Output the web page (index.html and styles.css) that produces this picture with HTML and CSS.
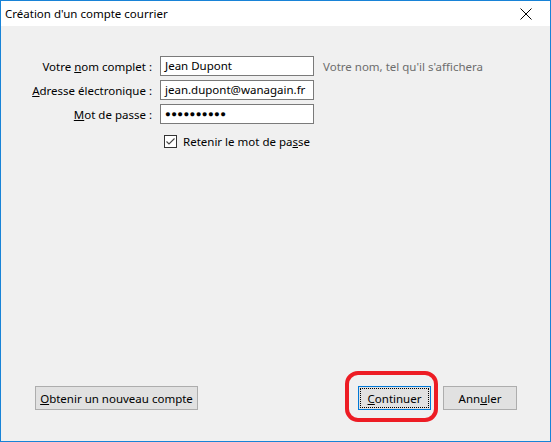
FILE: index.html
```html
<!DOCTYPE html>
<html lang="fr">
<head>
    <meta charset="UTF-8">
    <title>Création d'un compte courrier</title>
    <link rel="stylesheet" href="styles.css">
</head>
<body>
    <div class="window">
        <div class="titlebar">
            <span class="title">Création d'un compte courrier</span>
            <svg class="close" width="12" height="12" viewBox="0 0 12 12">
                <path d="M0.5 0.5 L11.5 11.5 M11.5 0.5 L0.5 11.5" stroke="#000" stroke-width="1" fill="none"/>
            </svg>
        </div>
        <div class="content">
            <div class="form">
                <label class="label">Votre <u>n</u>om complet :</label>
                <div class="field">Jean Dupont</div>
                <span class="hint">Votre nom, tel qu'il s'affichera</span>

                <label class="label"><u>A</u>dresse électronique :</label>
                <div class="field">jean.dupont@wanagain.fr</div>
                <span></span>

                <label class="label"><u>M</u>ot de passe :</label>
                <div class="field dots">●●●●●●●●●●</div>
                <span></span>

                <span></span>
                <div class="remember">
                    <span class="checkbox">
                        <svg width="11" height="11" viewBox="0 0 11 11">
                            <path d="M1.5 5.5 L4 8 L9.5 2.5" stroke="#444" stroke-width="1.1" fill="none"/>
                        </svg>
                    </span>
                    <span>Retenir le mot de pa<u>s</u>se</span>
                </div>
            </div>

            <div class="buttons">
                <button class="btn wide"><u>O</u>btenir un nouveau compte</button>
                <div class="right">
                    <div class="highlight">
                        <button class="btn focused"><u>C</u>ontinuer</button>
                    </div>
                    <button class="btn">Ann<u>u</u>ler</button>
                </div>
            </div>
        </div>
    </div>
</body>
</html>
```

FILE: styles.css
```css
body {
    margin: 0;
    font-family: "Noto Sans", "Open Sans", sans-serif;
    font-size: 11.5px;
    color: #000;
}
.window {
    width: 549px;
    height: 440px;
    border: 1px solid #1883d7;
    background: #f0f0f0;
    display: flex;
    flex-direction: column;
}
.titlebar {
    height: 25px;
    background: #fff;
    display: flex;
    align-items: center;
    justify-content: space-between;
    padding: 0 18px 0 4px;
}
.title {
    font-size: 11.5px;
    color: #000;
}
.content {
    flex: 1;
    display: flex;
    flex-direction: column;
    padding-top: 30px;
}
.form {
    display: grid;
    grid-template-columns: 151px 154px auto;
    column-gap: 8px;
    row-gap: 4px;
    align-items: center;
}
.label {
    text-align: right;
}
.field {
    height: 18px;
    border: 1px solid #7a7a7a;
    background: #fff;
    padding: 0 4px;
    line-height: 18px;
    white-space: nowrap;
    overflow: hidden;
}
.dots {
    font-size: 9.5px;
    letter-spacing: 0.4px;
}
.hint {
    color: #6d6d6d;
    margin-left: 1px;
}
.remember {
    grid-column: 2 / 4;
    display: flex;
    align-items: center;
    gap: 6px;
    margin: 6px 0 0 4px;
}
.checkbox {
    width: 11px;
    height: 11px;
    border: 1px solid #333;
    background: #fff;
    display: flex;
}
.buttons {
    margin-top: auto;
    margin-bottom: 31px;
    display: flex;
    justify-content: space-between;
    padding: 0 33px 0 34px;
}
.right {
    display: flex;
    gap: 12px;
}
.btn {
    height: 24px;
    width: 74px;
    font-family: inherit;
    font-size: 11.5px;
    color: #000;
    background: #e1e1e1;
    border: 1px solid #adadad;
    padding: 0;
}
.btn.wide {
    width: 163px;
}
.btn.focused {
    width: 73px;
    border-color: #0078d7;
    outline: 1px dotted #000;
    outline-offset: -3px;
}
.highlight {
    position: relative;
}
.highlight::before {
    content: "";
    position: absolute;
    left: -13px;
    top: -15px;
    right: -7px;
    bottom: -12px;
    border: 4px solid #ed1c24;
    border-radius: 13px;
}
```
